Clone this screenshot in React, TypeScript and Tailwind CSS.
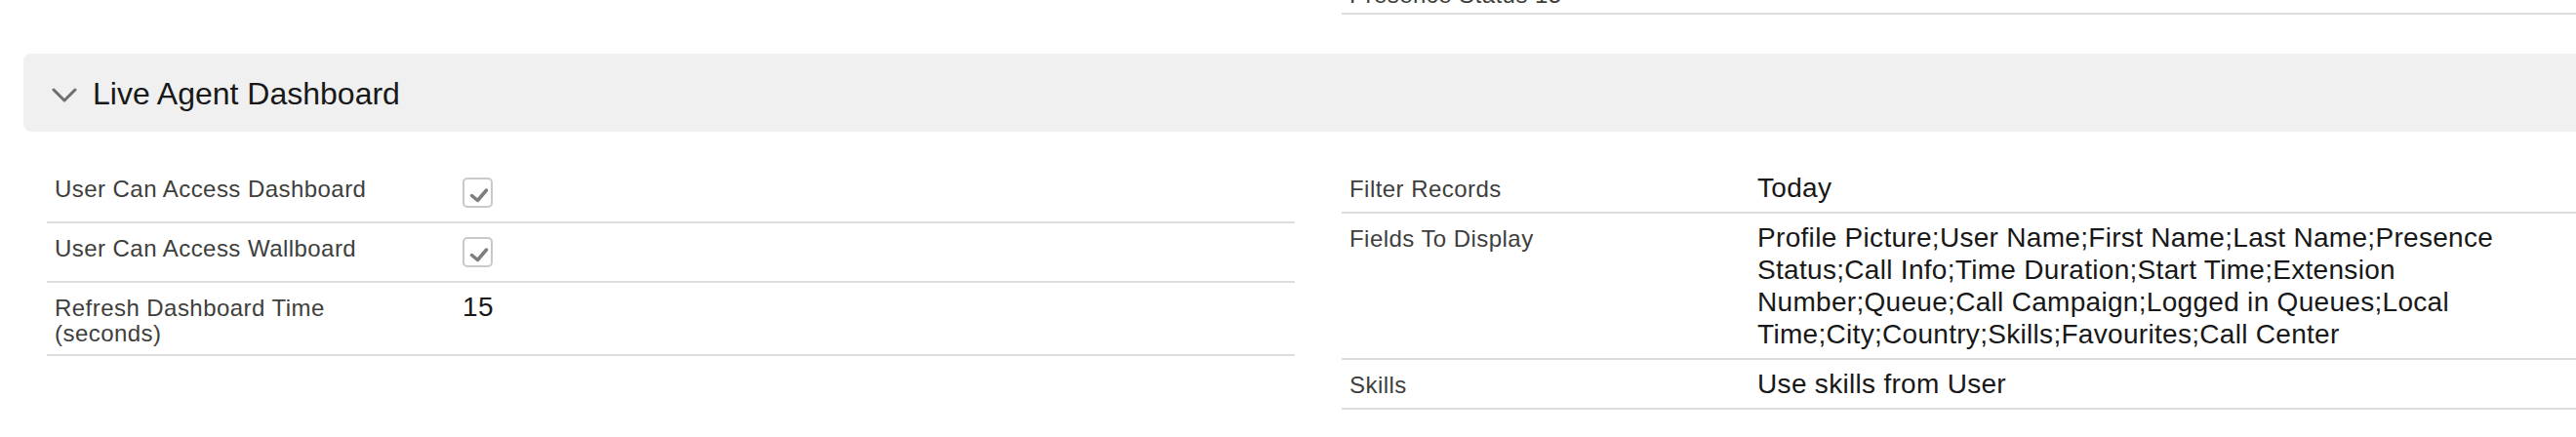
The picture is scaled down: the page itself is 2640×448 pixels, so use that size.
import React from "react";

type Field = { label: string; value?: string; checkbox?: boolean };

const LEFT: Field[] = [
  { label: "User Can Access Dashboard", checkbox: true },
  { label: "User Can Access Wallboard", checkbox: true },
  { label: "Refresh Dashboard Time (seconds)", value: "15" },
];

const RIGHT: Field[] = [
  { label: "Filter Records", value: "Today" },
  {
    label: "Fields To Display",
    value:
      "Profile Picture;User Name;First Name;Last Name;Presence Status;Call Info;Time Duration;Start Time;Extension Number;Queue;Call Campaign;Logged in Queues;Local Time;City;Country;Skills;Favourites;Call Center",
  },
  { label: "Skills", value: "Use skills from User" },
];

function CheckedBox() {
  return (
    <div className="py-[6px]">
      <div className="w-[31px] h-[31px] rounded-[5px] border-2 border-[#c9c9c9] bg-white">
        <svg width="27" height="27" viewBox="-2 -2 27 27" className="block">
          <polyline
            points="5.5,14.5 11.5,19.5 20.5,9"
            fill="none"
            stroke="#7e7e7e"
            strokeWidth="3.5"
            strokeLinecap="round"
            strokeLinejoin="round"
          />
        </svg>
      </div>
    </div>
  );
}

function FieldRow({ field }: { field: Field }) {
  return (
    <div className="flex items-start pt-[8px] pb-[8px] border-b-2 border-[#dddddd]">
      <div className="w-[33%] shrink-0 pl-[8px] pr-[56px] mt-[5px] text-[24px] leading-[26px] tracking-[0.45px] text-[#3e3e3c]">
        {field.label}
      </div>
      <div className="flex-1 pl-[4px] pr-[48px]">
        {field.checkbox ? (
          <CheckedBox />
        ) : (
          <div className="text-[28px] leading-[33px] tracking-[0.3px] text-[#181818]">{field.value}</div>
        )}
      </div>
    </div>
  );
}

export default function App() {
  return (
    <div className="w-full h-[448px] overflow-hidden bg-white font-['Liberation_Sans',Arial,sans-serif]">
      <div className="w-[2702px] px-[24px]">
        {/* tail of the previous section */}
        <div className="grid grid-cols-2 gap-x-[48px] px-[24px]">
          <div />
          <div className="h-[15px] flex items-end pb-[5px] pl-[8px] border-b-2 border-[#dddddd]">
            <span className="text-[24px] leading-[26px] tracking-[0.45px] text-[#3e3e3c]">Presence Status 15</span>
          </div>
        </div>

        {/* section header */}
        <div className="mt-[40px] h-[80px] rounded-[8px] bg-[#f0f0f0] flex items-center pl-[29px]">
          <svg width="26" height="16" viewBox="0 0 26 16" className="mt-[6px]">
            <polyline
              points="2,2 13,13 24,2"
              fill="none"
              stroke="#706e6b"
              strokeWidth="3"
              strokeLinecap="round"
              strokeLinejoin="round"
            />
          </svg>
          <h2 className="ml-[16px] text-[32px] leading-[40px] text-[#181818] mt-[2px]">Live Agent Dashboard</h2>
        </div>

        {/* section body */}
        <div className="mt-[33px] grid grid-cols-2 gap-x-[48px] px-[24px]">
          <div>
            {LEFT.map((f) => (
              <FieldRow key={f.label} field={f} />
            ))}
          </div>
          <div>
            {RIGHT.map((f) => (
              <FieldRow key={f.label} field={f} />
            ))}
          </div>
        </div>
      </div>
    </div>
  );
}
